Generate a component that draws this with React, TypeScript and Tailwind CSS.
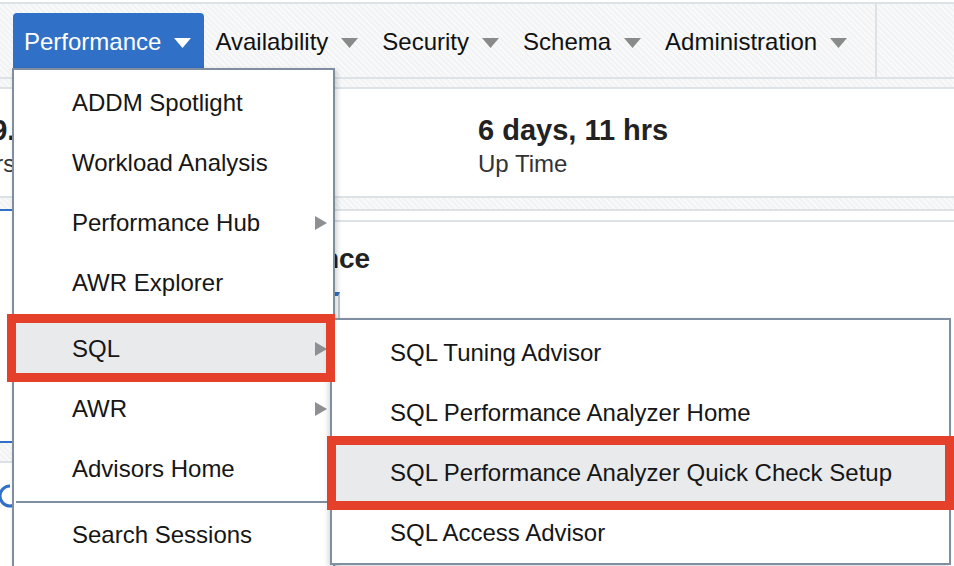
import React from "react";

const stripes =
  "bg-[repeating-linear-gradient(45deg,#f2f3f4_0px,#f2f3f4_2px,#f9f9fa_2px,#f9f9fa_4px)]";

const navItems = ["Performance", "Availability", "Security", "Schema", "Administration"];

const DownTriangle = (props: { color: string }) => (
  <svg width="17" height="10" viewBox="0 0 17 10" className="mt-[2px]">
    <polygon points="0,0 17,0 8.5,10" fill={props.color} />
  </svg>
);

const RightTriangle = () => (
  <svg width="12" height="14" viewBox="0 0 12 14">
    <polygon points="0,0 12,7 0,14" fill="#8d8f92" />
  </svg>
);

const MenuItem = (props: { label: string; sub?: boolean; active?: boolean }) => (
  <div
    className={
      "h-[60px] flex items-center justify-between pl-[58px] pr-[6px] text-[24px] leading-[28px] text-[#161616] " +
      (props.active ? "bg-[#e9eaec]" : "")
    }
  >
    <span>{props.label}</span>
    {props.sub && <RightTriangle />}
  </div>
);

const Separator = () => (
  <div className="h-[6px] flex items-center px-[2px]">
    <div className="h-[2px] w-full bg-[#7f8ea0]"></div>
  </div>
);

export default function App() {
  return (
    <div className="relative w-[954px] h-[566px] overflow-hidden bg-white font-['Liberation_Sans',Arial,sans-serif] text-[#161616]">
      {/* top nav */}
      <div className="pt-[2px]">
        <div className={"flex h-[77px] border-y-2 border-[#dde2e7] " + stripes}>
          <div className="flex items-start w-[877px] border-r-2 border-[#dde2e7] pl-[13px] pt-[9px]">
            {navItems.map((item, i) => (
              <div
                key={item}
                className={
                  "h-[55px] flex items-center gap-[13px] pl-[11px] pr-[13px] pt-[2px] text-[24px] leading-[28px] " +
                  (i === 0 ? "bg-[#3170c7] text-white rounded-t-[4px]" : "text-[#111111]")
                }
              >
                <span>{item}</span>
                <DownTriangle color={i === 0 ? "#ffffff" : "#8a8a8a"} />
              </div>
            ))}
          </div>
          <div className="flex-1"></div>
        </div>
        <div className={"h-[10px] border-b-2 border-[#dde2e7] " + stripes}></div>
      </div>

      {/* stats */}
      <div className="h-[107px] flex pt-[25px] text-[#222222]">
        <div className="-ml-[25px] w-[503px] flex flex-col gap-[3px]">
          <div className="text-[29px] leading-[33px] font-bold">99.98%</div>
          <div className="ml-[3px] text-[24px] leading-[28px] text-[#333333]">Hrs</div>
        </div>
        <div className="flex flex-col gap-[3px]">
          <div className="text-[29px] leading-[33px] font-bold">6 days, 11 hrs</div>
          <div className="text-[24px] leading-[28px] text-[#333333]">Up Time</div>
        </div>
      </div>
      <div className={"h-[13px] border-t-2 border-[#dde2e7] " + stripes}></div>

      {/* lower panels */}
      <div className="flex">
        <div className="w-[185px] border-t-2 border-[#3170c7]">
          <div className="h-[230px]"></div>
          <div className={"h-[22px] border-t-2 border-[#3170c7] border-b-2 border-b-[#dde2e7] " + stripes}></div>
          <div className="pt-[20px] -ml-[3px]">
            <svg width="26" height="26" viewBox="0 0 26 26">
              <path d="M13 3 A10 10 0 1 0 23 13" fill="none" stroke="#3170c7" strokeWidth="3" />
            </svg>
          </div>
        </div>
        <div className="flex-1 border-t-2 border-[#dde2e7] pt-[9px]">
          <div className="border-t-2 border-[#dde2e7] pt-[21px] pl-[14px]">
            <div className="text-[28px] leading-[32px] font-bold text-[#222222]">Performance</div>
            <div className="mt-[17px] w-[141px] h-[40px] border-t-4 border-[#3170c7] border-r-2 border-r-[#c3cad2]"></div>
          </div>
        </div>
      </div>

      {/* Performance dropdown */}
      <div className="absolute left-[12px] top-[68px] w-[323px] h-[520px] bg-white border-2 border-[#7f8ea0] pt-[3px] shadow-[2px_2px_5px_rgba(0,0,0,0.18)]">
        <MenuItem label="ADDM Spotlight" />
        <MenuItem label="Workload Analysis" />
        <MenuItem label="Performance Hub" sub />
        <MenuItem label="AWR Explorer" />
        <Separator />
        <MenuItem label="SQL" sub active />
        <MenuItem label="AWR" sub />
        <MenuItem label="Advisors Home" />
        <Separator />
        <MenuItem label="Search Sessions" />
      </div>

      {/* SQL submenu */}
      <div className="absolute left-[330px] top-[318px] w-[621px] h-[247px] bg-white border-2 border-[#7f8ea0] pt-[3px] shadow-[-2px_2px_5px_rgba(0,0,0,0.15)]">
        <MenuItem label="SQL Tuning Advisor" />
        <MenuItem label="SQL Performance Analyzer Home" />
        <MenuItem label="SQL Performance Analyzer Quick Check Setup" active />
        <MenuItem label="SQL Access Advisor" />
      </div>

      {/* annotation boxes */}
      <div className="absolute left-[7px] top-[314px] w-[328px] h-[68px] border-[9px] border-[#e5412a] pointer-events-none"></div>
      <div className="absolute left-[327px] top-[436px] w-[627px] h-[74px] border-[9px] border-[#e5412a] pointer-events-none"></div>
    </div>
  );
}
